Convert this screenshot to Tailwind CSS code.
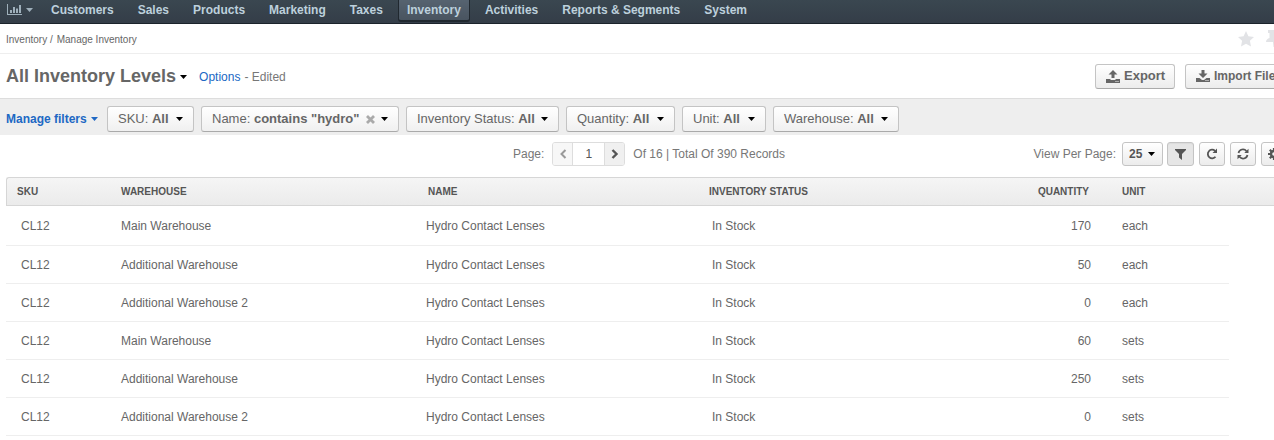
<!DOCTYPE html>
<html lang="en">
<head>
<meta charset="utf-8">
<title>All Inventory Levels</title>
<script src="https://cdn.jsdelivr.net/npm/@tailwindcss/browser@4"></script>
</head>
<body class="min-h-screen overflow-x-hidden bg-white font-['Liberation_Sans',Arial,sans-serif] text-xs text-[#666]">
<svg class="hidden">
  <symbol id="caret" viewBox="0 0 7 4"><path d="M0 0h7L3.500 4z" fill="currentColor"/></symbol>
</svg>
<div class="overflow-hidden">
<nav class="flex h-6 items-start border-b border-[#1b232b] bg-linear-to-b from-[#3a4750] to-[#343d48] font-bold text-[#bdd0dc]">
  <button type="button" aria-label="Dashboards" class="flex h-5 w-[39px] items-center gap-1 pl-[7px] text-[#9fb0bb]">
    <svg class="h-3 w-[15px]" viewBox="0 0 15 12" fill="currentColor"><path d="M0 0h1v10h14v1H0zM3 6h2v3H3zM6 3h2v6H6zM9 4.500h2V9H9zM12 1h2v8h-2z"/></svg>
    <svg class="h-1 w-[7px]"><use href="#caret"/></svg>
  </button>
  <a href="#" class="flex h-5 items-center px-3">Customers</a>
  <a href="#" class="flex h-5 items-center px-3">Sales</a>
  <a href="#" class="flex h-5 items-center px-3">Products</a>
  <a href="#" class="flex h-5 items-center px-3">Marketing</a>
  <a href="#" class="flex h-5 items-center px-3">Taxes</a>
  <a href="#" class="mx-[3px] h-[22px] rounded-b-[3px] border border-t-0 border-b-2 border-[#20282f] bg-linear-to-b from-[#566370] to-[#495460] px-2 leading-5">Inventory</a>
  <a href="#" class="flex h-5 items-center px-3">Activities</a>
  <a href="#" class="flex h-5 items-center px-3">Reports &amp; Segments</a>
  <a href="#" class="flex h-5 items-center px-3">System</a>
</nav>

<div class="flex h-[30px] items-center justify-between border-b border-[#eee] pl-1.5 text-[10px]">
  <div class="flex gap-1 pt-0.5"><a href="#">Inventory /</a><a href="#">Manage Inventory</a></div>
  <div class="-mr-2 flex items-center gap-3 text-[#e2e3e6]">
    <button type="button" aria-label="Add to favorites"><svg class="size-4" viewBox="0 0 16 16" fill="currentColor"><path d="M8 0l2.400 5.200 5.600.7-4.100 3.900 1.100 5.700L8 12.700l-5 2.800 1.100-5.700L0 5.900l5.600-.7z"/></svg></button>
    <button type="button" aria-label="Pin page"><svg class="h-[17px] w-4" viewBox="0 0 16 17" fill="currentColor"><path d="M2 0h12v3h-1.500v5C14.500 8.500 16 10 16 12H9l-.5 5h-1L7 12H0c0-2 1.500-3.500 3.500-4V3H2z"/></svg></button>
  </div>
</div>

<header class="flex h-11 items-center justify-between pl-1.5">
  <div class="flex items-center">
    <h1 class="text-lg font-bold">All Inventory Levels</h1>
    <button type="button" aria-label="Choose view" class="ml-1 pt-0.5 text-black"><svg class="h-1 w-[7px]"><use href="#caret"/></svg></button>
    <div class="ml-3 flex items-baseline gap-1 pt-0.5"><a href="#" class="text-[#2068c4]">Options</a><span class="text-[#777]">- Edited</span></div>
  </div>
  <div class="-mr-3 flex shrink-0 gap-2.5 font-bold">
    <button type="button" class="flex h-[25px] w-20 items-center gap-1 rounded-[3px] border border-[#c4c4c4] border-b-[#aaa] bg-linear-to-b from-white to-[#ececec] pl-2.5 text-[13px]">
      <svg class="h-[13px] w-[14px] shrink-0" viewBox="0 0 14 13" fill="currentColor"><path d="M7 0l4.500 4.500h-3V8h-3V4.500h-3z"/><path fill-rule="evenodd" d="M0 9h4.500v1h5V9H14v4H0zM9.500 11v1h1v-1zm2 0v1h1v-1z"/></svg>Export</button>
    <button type="button" class="flex h-[25px] w-[101px] items-center gap-1 rounded-[3px] border border-[#c4c4c4] border-b-[#aaa] bg-linear-to-b from-white to-[#ececec] pl-2.5 whitespace-nowrap">
      <svg class="h-[13px] w-[14px] shrink-0" viewBox="0 0 14 13" fill="currentColor"><path d="M5.500 0h3v3.500h3L7 8 2.500 3.500h3z"/><path fill-rule="evenodd" d="M0 8h3.500L6 10h2l2.500-2H14v4H0zM9.500 10v1h1v-1zm2 0v1h1v-1z"/></svg>Import File</button>
  </div>
</header>

<section aria-label="Filters" class="flex h-[37px] items-center gap-[7px] border-t border-[#ddd] bg-[#eee] pt-1 pl-1.5 text-[13px] whitespace-nowrap">
  <button type="button" class="flex w-[94px] items-center gap-1 text-xs font-bold text-[#2068c4]">Manage filters<svg class="h-1 w-[7px]"><use href="#caret"/></svg></button>
  <button type="button" class="flex h-[26px] w-[87px] items-center justify-between rounded-[3px] border border-[#c4c4c4] border-b-[#aaa] bg-linear-to-b from-white to-[#f0f0f0] px-2.5"><span>SKU: <b>All</b></span><svg class="h-1 w-[7px] text-black"><use href="#caret"/></svg></button>
  <div class="flex h-[26px] w-[198px] items-center rounded-[3px] border border-[#c4c4c4] border-b-[#aaa] bg-linear-to-b from-white to-[#f0f0f0] px-2.5">
    <button type="button" class="flex-1 text-left">Name: <b>contains "hydro"</b></button>
    <button type="button" aria-label="Reset filter" class="text-[#aaa]"><svg class="size-[9px]" viewBox="0 0 9 9"><path d="M1 1l7 7m0-7l-7 7" stroke="currentColor" stroke-width="2.800"/></svg></button>
    <button type="button" aria-label="Edit filter" class="ml-1.5 text-black"><svg class="h-1 w-[7px]"><use href="#caret"/></svg></button>
  </div>
  <button type="button" class="flex h-[26px] w-[153px] items-center justify-between rounded-[3px] border border-[#c4c4c4] border-b-[#aaa] bg-linear-to-b from-white to-[#f0f0f0] px-2.5"><span>Inventory Status: <b>All</b></span><svg class="h-1 w-[7px] text-black"><use href="#caret"/></svg></button>
  <button type="button" class="flex h-[26px] w-[109px] items-center justify-between rounded-[3px] border border-[#c4c4c4] border-b-[#aaa] bg-linear-to-b from-white to-[#f0f0f0] px-2.5"><span>Quantity: <b>All</b></span><svg class="h-1 w-[7px] text-black"><use href="#caret"/></svg></button>
  <button type="button" class="flex h-[26px] w-[84px] items-center justify-between rounded-[3px] border border-[#c4c4c4] border-b-[#aaa] bg-linear-to-b from-white to-[#f0f0f0] px-2.5"><span>Unit: <b>All</b></span><svg class="h-1 w-[7px] text-black"><use href="#caret"/></svg></button>
  <button type="button" class="flex h-[26px] w-[126px] items-center justify-between rounded-[3px] border border-[#c4c4c4] border-b-[#aaa] bg-linear-to-b from-white to-[#f0f0f0] px-2.5"><span>Warehouse: <b>All</b></span><svg class="h-1 w-[7px] text-black"><use href="#caret"/></svg></button>
</section>

<div class="grid h-[42px] grid-cols-[1fr_auto_1fr] items-center pb-1 text-[#777]">
  <div></div>
  <div class="flex items-center pl-6">
    <label for="page">Page:</label>
    <div class="ml-2 flex h-6 w-[73px] overflow-hidden rounded-[3px] border border-[#ddd]">
      <button type="button" aria-label="Previous page" class="flex w-[19px] items-center justify-center bg-[#f7f7f7] text-[#999]"><svg class="h-2.5 w-2" viewBox="0 0 8 10"><path d="M6.500 1l-4 4 4 4" fill="none" stroke="currentColor" stroke-width="2"/></svg></button>
      <input id="page" value="1" class="w-[33px] border-x border-[#ddd] bg-white text-center text-[#555]">
      <button type="button" aria-label="Next page" class="flex w-[19px] items-center justify-center bg-[#f0f0f0] text-[#555]"><svg class="h-2.5 w-2" viewBox="0 0 8 10"><path d="M1.500 1l4 4-4 4" fill="none" stroke="currentColor" stroke-width="2.400"/></svg></button>
    </div>
    <span class="ml-2">Of 16 | Total Of 390 Records</span>
  </div>
  <div class="-mr-[13px] flex items-center justify-end">
    <label for="per-page" class="mr-1.5">View Per Page:</label>
    <div class="relative mr-1">
      <select id="per-page" class="block h-6 w-[41px] appearance-none rounded-[3px] border border-[#c4c4c4] bg-linear-to-b from-white to-[#ececec] pl-1.5 text-xs font-bold text-[#555]"><option>25</option></select>
      <svg class="pointer-events-none absolute top-2.5 right-2 h-1 w-[7px] text-black"><use href="#caret"/></svg>
    </div>
    <div class="flex gap-[5px] text-[#555]">
      <button type="button" aria-label="Filters" aria-pressed="true" class="flex h-6 w-[27px] items-center justify-center rounded-[3px] border border-[#c4c4c4] bg-[#e6e6e6] inset-shadow-xs"><svg class="h-3 w-[11px]" viewBox="0 0 11 12" fill="currentColor"><path d="M0 1h11v1L7 6v6L4 9.500V6L0 2z"/></svg></button>
      <button type="button" aria-label="Refresh" class="flex h-6 w-[26px] items-center justify-center rounded-[3px] border border-[#c4c4c4] bg-linear-to-b from-white to-[#ececec]"><svg class="size-3" viewBox="0 0 12 12"><path d="M9.500 8.700A4.300 4.300 0 1 1 9 2.800" fill="none" stroke="currentColor" stroke-width="1.800"/><path d="M11 .5V5H6.500z" fill="currentColor"/></svg></button>
      <button type="button" aria-label="Reset" class="flex h-6 w-[26px] items-center justify-center rounded-[3px] border border-[#c4c4c4] bg-linear-to-b from-white to-[#ececec]"><svg class="size-3" viewBox="0 0 12 12"><path d="M1.500 5A4.500 4.500 0 0 1 9.500 3.200M10.500 7A4.500 4.500 0 0 1 2.500 8.800" fill="none" stroke="currentColor" stroke-width="1.700"/><path d="M11.500 .8V5H7.300zM.5 11.200V7h4.200z" fill="currentColor"/></svg></button>
      <button type="button" aria-label="Grid settings" class="flex h-6 w-[26px] items-center justify-center rounded-[3px] border border-[#c4c4c4] bg-linear-to-b from-white to-[#ececec]"><svg class="size-3" viewBox="0 0 12 12"><circle cx="6" cy="6" r="3" fill="none" stroke="currentColor" stroke-width="2.400"/><path d="M6 0v2.500M6 9.500V12M0 6h2.500M9.500 6H12M1.800 1.800l1.700 1.700M8.500 8.500l1.700 1.700M10.200 1.800L8.500 3.500M3.500 8.500l-1.700 1.700" stroke="currentColor" stroke-width="2.200"/></svg></button>
    </div>
  </div>
</div>

<div class="pl-1.5">
<table class="w-full table-fixed border-separate border-spacing-0 text-left">
  <colgroup><col class="w-[115px]"><col class="w-[305px]"><col class="w-[283px]"><col><col class="w-[100px]"><col class="w-[138px]"><col class="w-[45px]"></colgroup>
  <thead class="text-[10px] text-[#555] uppercase [&_th]:h-[29px] [&_th]:border-y [&_th]:border-[#d6d6d6] [&_th]:bg-linear-to-b [&_th]:from-[#f5f5f5] [&_th]:to-[#ebebeb] [&_th]:p-0">
    <tr><th class="rounded-tl-[3px] border-l"><span class="pl-2.5">SKU</span></th><th>Warehouse</th><th><span class="pl-0.5">Name</span></th><th>Inventory Status</th><th class="text-right"><span class="pr-0.5">Quantity</span></th><th><span class="pl-[31px]">Unit</span></th><th></th></tr>
  </thead>
  <tbody class="[&_td]:h-[38px] [&_td]:border-b [&_td]:border-[#eee] [&_td]:p-0 [&_td:first-child]:pl-[15px] [&_td:last-child]:border-b-0 [&_td:nth-child(4)]:pl-[3px] [&_td:nth-child(5)]:text-right [&_td:nth-child(6)]:pl-[31px] [&_tr:first-child_td]:h-10">
    <tr><td>CL12</td><td>Main Warehouse</td><td>Hydro Contact Lenses</td><td>In Stock</td><td>170</td><td>each</td><td></td></tr>
    <tr><td>CL12</td><td>Additional Warehouse</td><td>Hydro Contact Lenses</td><td>In Stock</td><td>50</td><td>each</td><td></td></tr>
    <tr><td>CL12</td><td>Additional Warehouse 2</td><td>Hydro Contact Lenses</td><td>In Stock</td><td>0</td><td>each</td><td></td></tr>
    <tr><td>CL12</td><td>Main Warehouse</td><td>Hydro Contact Lenses</td><td>In Stock</td><td>60</td><td>sets</td><td></td></tr>
    <tr><td>CL12</td><td>Additional Warehouse</td><td>Hydro Contact Lenses</td><td>In Stock</td><td>250</td><td>sets</td><td></td></tr>
    <tr><td>CL12</td><td>Additional Warehouse 2</td><td>Hydro Contact Lenses</td><td>In Stock</td><td>0</td><td>sets</td><td></td></tr>
  </tbody>
</table>
</div>
</div>
</body>
</html>
